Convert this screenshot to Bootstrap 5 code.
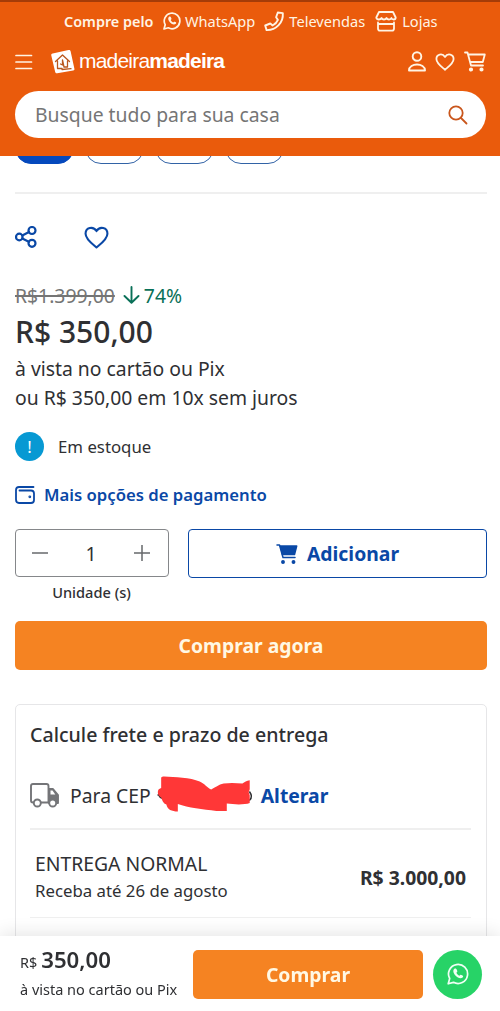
<!DOCTYPE html>
<html lang="pt-BR">
<head>
<meta charset="utf-8">
<meta name="viewport" content="width=device-width, initial-scale=1">
<title>MadeiraMadeira</title>
<link href="https://cdn.jsdelivr.net/npm/bootstrap@5.3.0/dist/css/bootstrap.min.css" rel="stylesheet">
<style>
  html, body { height: 1011px; overflow: hidden; }
  body { font-family: "Noto Sans", "Open Sans", sans-serif; color: #2f3033; font-size: 19.35px; line-height: 29px; background: #fff; }
  svg { display: block; flex: none; fill: none; stroke-linecap: round; stroke-linejoin: round; }
  svg:not([stroke]) { stroke: currentColor; }
  .site-head { height: 156px; background: #ea5b0c; border-top: 2px solid #a53c08; color: #fff4e4; }
  .contact-bar { height: 38px; font-size: 14.6px; padding-left: 64px; }
  .brand-bar { height: 43px; padding: 0 14px 0 15px; }
  .brand-name { font-family: "Liberation Sans", Arial, sans-serif; font-size: 21px; letter-spacing: -.8px; line-height: 24px; margin: -2px 0 0 4px; }
  .search-box { height: 47px; margin: 8px 14px 0 15px; padding: 0 18px 0 20px; background: #fff; color: #757575; }
  .pill-row { height: 8px; margin-left: 15px; gap: 11px; }
  .pill { width: 59px; height: 32px; border: 1.3px solid #3263a6; border-radius: 16px; }
  .pill.current { background: #0549bd; border-color: #0549bd; }
  .rule { height: 2px; background: #efefef; }
  .content { padding: 0 13px 0 15px; }
  .blue { color: #0a48a6; }
  .old-price { color: #757575; text-decoration: line-through; text-decoration-thickness: 2px; }
  .off { color: #0a7058; }
  .price { font-size: 30px; line-height: 36px; font-weight: 500; }
  .info { width: 29px; height: 29px; background: #0799d3; }
  .t17 { font-size: 16.8px; }
  .qty { width: 154px; height: 48px; border: 1px solid #85878a; border-radius: 4px; color: #66686b; padding: 0 18px 0 16px; }
  .add { height: 49px; border: 1.3px solid #0a48a6; border-radius: 4px; color: #0a48a6; }
  .unit { width: 153px; font-size: 14.6px; line-height: 22px; font-weight: 500; }
  .buy { background: #f58322; color: #fff8e4; height: 49px; border-radius: 5px; }
  .ship { height: 260px; border: 1px solid #e6e6e8; border-radius: 5px; padding: 0 15px 0 14px; }
  .ship h2 { font-size: 19.6px; font-weight: 500; line-height: 29px; margin: 15px 0 0; }
  .cep { height: 66px; margin-top: 13px; }
  .scribble { width: 100px; height: 38px; margin: 0 4px 0 6px; }
  .foot { height: 75px; background: #fff; box-shadow: 0 -4px 16px rgba(0,0,0,.09); padding: 1px 18px 0 20px; }
  .wa { width: 49px; height: 49px; background: #27d367; color: #effff4; }
</style>
</head>
<body>
<svg width="0" height="0" class="position-absolute">
  <symbol id="wa" viewBox="0 0 18 18"><path d="M1 17l1.200-4.300A7.800 7.800 0 1 1 5.300 15.800z"/><path d="M6 4.800c-1.600 1.600-.6 4 1.100 5.700s4 2.700 5.700 1.300c.8-.8.4-1.200-.4-1.700-1.200-.7-1.500-.6-2.200.3-1.200-.5-2-1.300-2.500-2.500.9-.7 1-1 .4-2.200-.5-1-.9-1.500-2.100-.9z" fill="currentColor" stroke="none"/></symbol>
  <symbol id="heart" viewBox="0 0 24 22"><path d="M12 20.500C8 17 1.500 12.500 1.500 7.300 1.500 1.400 8.800-.3 12 4.800c3.200-5.100 10.500-3.400 10.500 2.500C22.500 12.500 16 17 12 20.500z"/></symbol>
</svg>

<header class="site-head">
  <div class="contact-bar d-flex align-items-center">
    <strong class="fw-semibold me-2" style="width:91px;font-size:14.400px">Compre pelo</strong>
    <svg width="18" height="18" stroke-width="1.700"><use href="#wa"/></svg><span class="ms-1">WhatsApp</span>
    <svg style="margin-left:9px" width="21" height="21" viewBox="0 0 21 21" stroke-width="1.900"><path d="M13.800 1.500l5 .6c.8 9.300-6.500 17.200-16.200 17l-1.400-4.600 5.100-2 2.300 2c2.600-1.300 4.300-3.100 5.300-5.600l-1.800-2.600z"/></svg><span class="ms-1">Televendas</span>
    <svg style="margin-left:10px" width="22" height="21" viewBox="0 0 22 21" stroke-width="1.800"><path d="M4 1h14l2.700 5.500c0 1.500-1 2-2 2s-2-.8-2.300-1.500C16 8 15 8.500 14 8.500S12 8 11.500 7C11 8 10 8.500 9 8.500S7 8 6.500 7C6 8 5 8.500 3.800 8.500s-2.500-.8-2.500-2zM3 11.500v6c0 1.500.5 2.200 2 2.200h12c1.500 0 2-.7 2-2.200v-6M3 13h16"/></svg><span style="margin-left:5px">Lojas</span>
  </div>
  <div class="brand-bar d-flex align-items-center">
    <svg width="18" height="16" viewBox="0 0 18 16" stroke-width="1.700"><path d="M1 1.500h15.500M1 8h15.500M1 14.500h15.500"/></svg>
    <svg style="margin-left:17px" width="25" height="25" viewBox="0 0 25 25" stroke="none"><path d="M2.700 4.400L18.500 1c1.200-.2 1.800.2 2.100 1.300l3.800 17.400c.2 1-.2 1.600-1.200 1.800l-16 2.800c-1.100.2-1.700-.2-2-1.200L1.300 6.500c-.3-1.200.2-1.800 1.400-2.100z" fill="#fff"/><path d="M5.500 12.500l7-6.500 7 6.500M7.500 12v7.500h4.500M17.500 12v6h-3.500l-1.500-7v5l-2-1M12 20.500l9-.8" stroke="#b9571e" stroke-width="1.300"/></svg>
    <span class="brand-name text-white">madeira<b>madeira</b></span>
    <svg class="ms-auto" width="18" height="21" viewBox="0 0 18 21" stroke-width="1.900"><circle cx="9" cy="5.500" r="4.300"/><path d="M1 19.500c0-8 16-8 16 0z"/></svg>
    <svg style="margin-left:9px" width="20" height="18" stroke-width="2.200"><use href="#heart"/></svg>
    <svg style="margin-left:9px" width="22" height="21" viewBox="0 0 22 21" stroke-width="1.800"><path d="M1 1.500h2.500L7 14.500h12M4.300 3.500h16.500l-2 7.500H6.500"/><circle cx="7" cy="18.500" r="1.200" fill="currentColor"/><circle cx="17.500" cy="18.500" r="1.200" fill="currentColor"/></svg>
  </div>
  <div class="search-box rounded-pill d-flex align-items-center justify-content-between">
    <span>Busque tudo para sua casa</span>
    <svg width="20" height="20" viewBox="0 0 20 20" stroke="#c9561c" stroke-width="1.800"><circle cx="8" cy="8" r="6.700"/><path d="M13 13l5.500 5.500"/></svg>
  </div>
</header>

<div class="pill-row d-flex align-items-end overflow-hidden">
  <div class="pill current"></div><div class="pill"></div><div class="pill"></div><div class="pill"></div>
</div>

<main class="content">
  <div class="rule" style="margin-top:28px"></div>
  <div class="d-flex align-items-center blue" style="height:86px">
    <svg width="22" height="22" viewBox="0 0 22 22" stroke-width="2.200"><circle cx="4.300" cy="11" r="3.300"/><circle cx="17" cy="4.500" r="3.500"/><circle cx="17" cy="17.300" r="3.500"/><path d="M7.300 9.500L14 6M7.300 12.500l6.500 3.200"/></svg>
    <svg style="margin-left:47px" width="25" height="23" stroke-width="2"><use href="#heart"/></svg>
  </div>
  <div class="d-flex align-items-center" style="height:30px">
    <span class="old-price">R$1.399,00</span>
    <svg class="off" style="margin-left:8px" width="17" height="18" viewBox="0 0 17 18" stroke-width="1.900"><path d="M8.500 1v15.500M1.500 10l7 6.800 7-6.800"/></svg>
    <span class="off" style="margin-left:4px">74%</span>
  </div>
  <div class="price" style="margin-top:4px">R$ 350,00</div>
  <div style="margin-top:4px">à vista no cartão ou Pix</div>
  <div>ou R$ 350,00 em 10x sem juros</div>
  <div class="d-flex align-items-center" style="margin-top:20px">
    <div class="info rounded-circle text-white text-center t17">!</div>
    <span class="t17" style="margin-left:14px">Em estoque</span>
  </div>
  <div class="d-flex align-items-center blue fw-semibold" style="margin-top:19px;font-size:16.700px">
    <svg width="20" height="18" viewBox="0 0 20 18" stroke-width="1.800"><path d="M18.500 1H4C2 1 1 2 1 4v9.500C1 16 2 17 4 17h12c2 0 3-1 3-3V7.500c0-2-1-3-3-3H4.500"/><circle cx="14.800" cy="10.800" r=".5" fill="currentColor"/></svg>
    <span style="margin-left:9px">Mais opções de pagamento</span>
  </div>
  <div class="d-flex align-items-start" style="margin-top:20px">
    <div class="qty d-flex align-items-center justify-content-between">
      <svg width="16" height="16" viewBox="0 0 16 16" stroke-width="1.500"><path d="M0 8h16"/></svg>
      <span style="color:#2f3033">1</span>
      <svg width="16" height="16" viewBox="0 0 16 16" stroke-width="1.500"><path d="M0 8h16M8 0v16"/></svg>
    </div>
    <div class="add flex-grow-1 d-flex align-items-center justify-content-center fw-bold" style="margin-left:19px">
      <svg width="22" height="20" viewBox="0 0 22 20" stroke-width="1.500"><path d="M1 1h2.500L7 13.500h12"/><path d="M4.500 2h16.200l-2.200 8.500H6.500z" fill="currentColor"/><circle cx="7" cy="18" r="1.200" fill="currentColor"/><circle cx="17.500" cy="18" r="1.200" fill="currentColor"/></svg>
      <span style="margin-left:9px">Adicionar</span>
    </div>
  </div>
  <div class="unit text-center" style="margin-top:3px">Unidade (s)</div>
  <div class="buy d-flex align-items-center justify-content-center fw-bold" style="margin-top:18px">Comprar agora</div>

  <section class="ship" style="margin-top:34px">
    <h2>Calcule frete e prazo de entrega</h2>
    <div class="cep d-flex align-items-center">
      <svg width="30" height="25" viewBox="0 0 30 25" stroke="#747578" stroke-width="1.900"><path d="M3.500 19.500H3c-1.500 0-2-.7-2-2V3c0-1.300.7-2 2-2h13.500c1.300 0 2 .7 2 2v16.500H11"/><path d="M19 6h4l5 6v8h-2.500c-1-4-6-3.500-6 0H19z" fill="#747578"/><path d="M20.500 7.500h2l2.800 4h-4.800z" fill="#fff" stroke="none"/><circle cx="7.300" cy="20" r="3.500" fill="#fff"/><circle cx="22.700" cy="20" r="3.500" fill="#fff"/></svg>
      <span style="margin-left:10px">Para CEP</span>
      <svg class="scribble" viewBox="0 0 96 38" preserveAspectRatio="none"><path d="M6 15H3c-2 1-2 8 4 7M1 19h6M89 16c2 3 2 6 0 8" stroke="#2f3033" stroke-width="1.500"/><path d="M4 2c0-1 1-1.500 3-1.500 10 .5 25 1 34 5 5 2.500 7 6 11 8 4-2 7-5 12-6 7-1 12-.5 18 0 2-1 4-3 7-3.200v9l-1 3 1 3V27c-5 2-15 1.500-22 .6V35h-10c-13-2-27-3-37-7v7.500c-6 0-10-2-11-7-3-1-4-4-5-7-3-2-4-5-2.500-8 1-1 2-1 2.500-1.500z" fill="#ff3737" stroke="none"/></svg>
      <span class="blue fw-bold">Alterar</span>
    </div>
    <div class="rule"></div>
    <div class="d-flex align-items-center justify-content-between" style="height:87px;padding:7px 5px 0">
      <div><div style="line-height:27px">ENTREGA NORMAL</div><div class="t17" style="line-height:27px">Receba até 26 de agosto</div></div>
      <b class="fw-bold">R$ 3.000,00</b>
    </div>
    <div class="rule" style="height:1px"></div>
  </section>
</main>

<footer class="foot fixed-bottom d-flex align-items-center">
  <div style="width:173px">
    <div style="line-height:28px"><span style="font-size:14.400px">R$</span> <span class="fw-semibold" style="font-size:22.200px;margin-left:-1px">350,00</span></div>
    <div style="font-size:14.500px;line-height:25px">à vista no cartão ou Pix</div>
  </div>
  <div class="buy flex-grow-1 d-flex align-items-center justify-content-center fw-bold">Comprar</div>
  <div class="wa rounded-circle d-flex align-items-center justify-content-center" style="margin-left:10px"><svg width="22" height="22" stroke-width="1.400"><use href="#wa"/></svg></div>
</footer>
<script src="https://cdn.jsdelivr.net/npm/bootstrap@5.3.0/dist/js/bootstrap.bundle.min.js"></script>
</body>
</html>
